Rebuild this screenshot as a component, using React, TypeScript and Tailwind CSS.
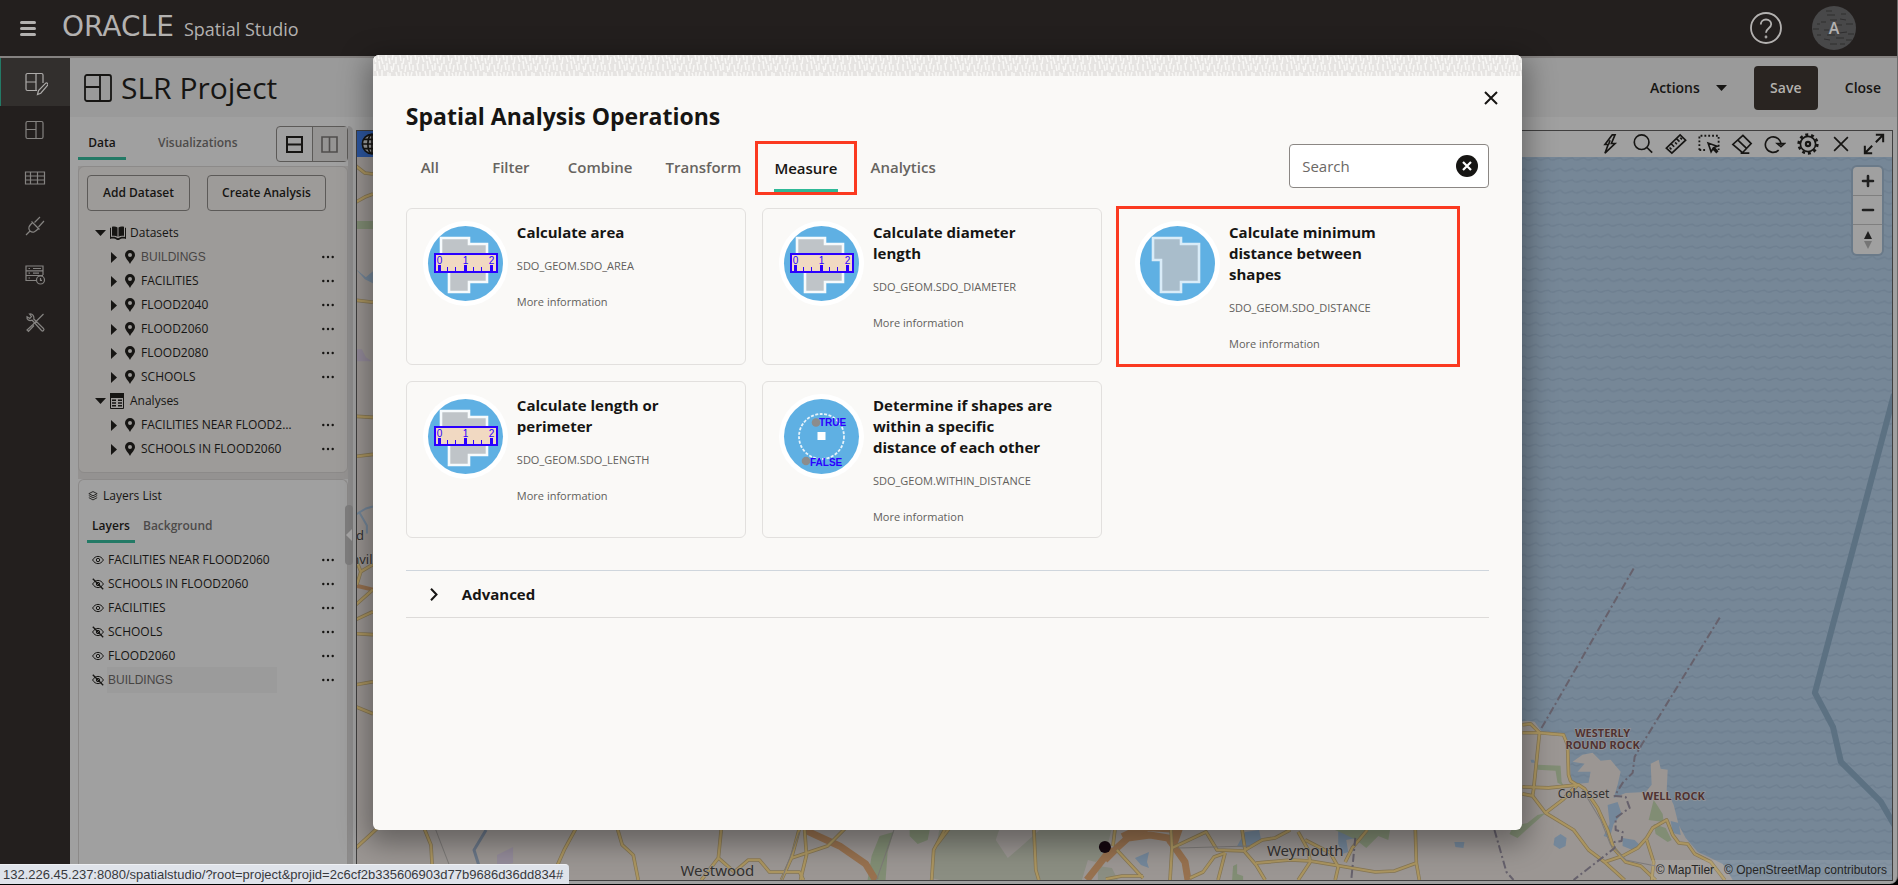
import type { ReactNode } from "react";

const SANS = "font-['Open_Sans','Noto_Sans',sans-serif]";

/* ---------- icons ---------- */

type IconProps = { className?: string; children: ReactNode; box?: string };

function Icon({ className = "size-6", children, box = "0 0 24 24" }: IconProps) {
  return (
    <svg
      viewBox={box}
      className={className}
      fill="none"
      stroke="currentColor"
      strokeWidth="1.8"
      aria-hidden="true"
    >
      {children}
    </svg>
  );
}

const LayoutIcon = ({ className }: { className?: string }) => (
  <Icon className={className} box="0 0 28 28">
    <rect x="1" y="1" width="26" height="26" rx="2" />
    <path d="M16 1v26M1 13h15" />
  </Icon>
);

const PinIcon = () => (
  <svg viewBox="0 0 10 14" className="h-[14px] w-[10px]" fill="currentColor" aria-hidden="true">
    <path fillRule="evenodd" d="M5 0a5 5 0 0 1 5 5c0 3-3 5-5 9C3 10 0 8 0 5a5 5 0 0 1 5-5Zm0 3a2 2 0 1 0 0 4 2 2 0 0 0 0-4Z" />
  </svg>
);

const CaretRight = () => (
  <svg viewBox="0 0 6 11" className="h-[11px] w-[6px]" fill="currentColor" aria-hidden="true">
    <path d="M0 0l6 5.500L0 11Z" />
  </svg>
);

const CaretDown = ({ className = "h-[6px] w-[11px]" }: { className?: string }) => (
  <svg viewBox="0 0 11 6" className={className} fill="currentColor" aria-hidden="true">
    <path d="M0 0h11L5.500 6Z" />
  </svg>
);

const DotsIcon = () => (
  <svg viewBox="0 0 12 4" className="h-1 w-3" fill="currentColor" aria-hidden="true">
    <circle cx="1.300" cy="2" r="1.200" />
    <circle cx="6" cy="2" r="1.200" />
    <circle cx="10.700" cy="2" r="1.200" />
  </svg>
);

const EyeIcon = ({ off }: { off?: boolean }) => (
  <svg viewBox="0 0 12 12" className="size-3" fill="none" stroke="currentColor" aria-hidden="true">
    <path d="M.6 6C2 3.600 3.900 2.400 6 2.400S10 3.600 11.400 6C10 8.400 8.100 9.600 6 9.600S2 8.400.6 6Z" />
    <circle cx="6" cy="6" r="1.700" />
    {off && <path d="M.8.8l10.400 10.400" strokeWidth="1.300" />}
  </svg>
);

/* ---------- top bar ---------- */

function TopBar() {
  return (
    <header className="flex h-[58px] shrink-0 items-center border-b-2 border-[#858281] bg-[#231f1e] pr-[41px] pl-5 text-[#b3b1b0]">
      <button aria-label="Menu" className="flex w-4 flex-col gap-[3px]">
        <span className="h-[3px] rounded-sm bg-current" />
        <span className="h-[3px] rounded-sm bg-current" />
        <span className="h-[3px] rounded-sm bg-current" />
      </button>
      <a href="#home" className="ml-[26px] flex items-baseline gap-[10px]">
        <span className="font-['DejaVu_Sans',sans-serif] text-[28px] leading-[30px]">ORACLE</span>
        <span className="text-[18px] leading-[30px]">Spatial Studio</span>
      </a>
      <button aria-label="Help" className="ml-auto">
        <svg viewBox="0 0 32 32" className="size-8" fill="none" stroke="currentColor" strokeWidth="1.800" aria-hidden="true">
          <circle cx="16" cy="16" r="15" />
          <path d="M10.800 12.500c0-3 2.200-5 5.200-5s5.200 2 5.200 4.800c0 4-5.200 4-5.200 8.500" />
          <circle cx="16" cy="25" r=".5" />
        </svg>
      </button>
      <button className="relative ml-[30px] flex size-11 items-center justify-center overflow-hidden rounded-full bg-[#484849] text-[16px] font-semibold">
        <svg viewBox="0 0 44 44" className="absolute inset-0 size-full" stroke="#2f2e2f" strokeWidth="1" aria-hidden="true">
          <path d="M15 9h8M18 14h7M28 13l6 1M5 18h3M34 18h7M1 23h6M12 24h5M27 27l8-1M5 29h4M15 29h8M12 33l6 1M24 32h8M34 34h6M18 38h7M9 16h5M29 8h5M24 19h6M36 28h6M14 5h6M28 38h5" />
        </svg>
        <span className="relative">A</span>
      </button>
    </header>
  );
}

/* ---------- side navigation ---------- */

const navItems: { label: string; icon: ReactNode }[] = [
  {
    label: "Active project",
    icon: (
      <>
        <path d="M19 11V3a1.500 1.500 0 0 0-1.500-1.500h-14A1.500 1.500 0 0 0 2 3v14a1.500 1.500 0 0 0 1.500 1.500H13M12 1.500v17M2 10h10" />
        <path d="M13.500 22.500l1-4L21.500 11.300a1.300 1.300 0 0 1 2 2L16.800 21.200Z" />
      </>
    ),
  },
  {
    label: "Projects",
    icon: (
      <>
        <rect x="3" y="3.500" width="17" height="17" rx="1.500" />
        <path d="M13 3.500v17M3 11.500h10" />
      </>
    ),
  },
  { label: "Datasets", icon: <path d="M2.500 6h19v12h-19ZM2.500 10h19M2.500 14h19M7.500 6v12M14.500 6v12" /> },
  {
    label: "Connections",
    icon: <path d="M3 21l4-4M7 17c-2.500-3-1-5 2.500-8.500l6 6C12 18 10 19.500 7 17ZM11.500 8.500L17 3M15.500 13L21 7M8.500 7.500l8 8" />,
  },
  {
    label: "Jobs",
    icon: (
      <>
        <path d="M13 18.500H3v-5h17M3 8.800h17M3 8.800V4h17v9M3 8.800v4.700M5.500 6.500H7M10 6.500h8M5.500 11.200H7M10 11.200h6M5.500 16H7" />
        <circle cx="17.500" cy="18" r="4" />
        <path d="M17.500 16v2.300H19" />
      </>
    ),
  },
  {
    label: "Tools",
    icon: (
      <path d="M20.500 4L10 14.500 4 20l1.500 1.500L11 15.500M9 10l9.500 10.500a1.300 1.300 0 0 0 2-2L10.800 9c.6-2.500-1-5.500-4.300-5l2 2.500-1.700 2L4 6.700c-.6 3 2.500 4.800 5 3.300" />
    ),
  },
];

function SideNav() {
  return (
    <nav className="flex w-[70px] shrink-0 flex-col bg-[#231f1e] text-[#858381]">
      {navItems.map((item, i) => (
        <a
          key={item.label}
          href={"#" + item.label.toLowerCase().replace(" ", "-")}
          aria-label={item.label}
          className={
            "flex h-12 items-center justify-center " +
            (i === 0 ? "border-l border-[#237a66] bg-[#322f2d] pt-1 text-[#aeacaa]" : "")
          }
        >
          <svg viewBox="0 0 24 24" className="size-6" fill="none" stroke="currentColor" strokeWidth="1.200" aria-hidden="true">
            {item.icon}
          </svg>
        </a>
      ))}
    </nav>
  );
}

/* ---------- project bar ---------- */

function ProjectBar() {
  return (
    <div className="flex h-[59px] items-center bg-[#9a9a9a] pr-4 pl-[14px]">
      <LayoutIcon className="size-7" />
      <h1 className="ml-[9px] text-[30px] leading-9">SLR Project</h1>
      <button className="ml-auto flex items-center gap-4 text-[14px] font-semibold">
        Actions
        <CaretDown />
      </button>
      <button className="ml-[27px] h-11 w-16 rounded bg-[#292421] text-[14px] font-semibold text-[#b3b1ae]">Save</button>
      <button className="ml-[27px] text-[14px] font-semibold">Close</button>
    </div>
  );
}

/* ---------- left panel ---------- */

const datasets = ["BUILDINGS", "FACILITIES", "FLOOD2040", "FLOOD2060", "FLOOD2080", "SCHOOLS"];
const analyses = ["FACILITIES NEAR FLOOD2060", "SCHOOLS IN FLOOD2060"];
const layers = [
  { name: "FACILITIES NEAR FLOOD2060", visible: true },
  { name: "SCHOOLS IN FLOOD2060", visible: false },
  { name: "FACILITIES", visible: true },
  { name: "SCHOOLS", visible: false },
  { name: "FLOOD2060", visible: true },
  { name: "BUILDINGS", visible: false },
];

const ARIAL = "font-['Liberation_Sans',Arial,sans-serif] text-[#474544]";

function TreeRow({ name }: { name: string }) {
  return (
    <li className="flex h-6 items-center pl-8">
      <button aria-label={"Expand " + name} className="w-[14px]">
        <CaretRight />
      </button>
      <PinIcon />
      <span className={"ml-[6px] w-[156px] truncate text-[12px] " + (name === "BUILDINGS" ? ARIAL : "")}>{name}</span>
      <button aria-label={"Options for " + name} className="mr-[13px] ml-auto">
        <DotsIcon />
      </button>
    </li>
  );
}

function DataPanel() {
  return (
    <section className="rounded-md border border-[#8c8a89] bg-[#9d9b99] pt-2 pb-[11px]">
      <div className="flex gap-[17px] pl-2 text-[12px] font-semibold">
        <button className="h-9 w-[103px] rounded border border-[#5c5a58]">Add Dataset</button>
        <button className="h-9 w-[119px] rounded border border-[#5c5a58]">Create Analysis</button>
      </div>
      <div className="mt-[10px] flex h-6 items-center pl-4 text-[12px]">
        <CaretDown />
        <svg viewBox="0 0 16 14" className="mx-1 h-[14px] w-4" aria-hidden="true">
          <path fill="currentColor" d="M0 2l1-.5V11c3-.6 5 0 7 1.300C10 11 12 10.400 15 11V1.500l1 .5v11c-3-.8-5-.4-7 1H7c-2-1.400-4-1.800-7-1Z" />
          <path fill="currentColor" d="M2 .7c2.500-.6 4-.2 5.500.8v9.200C6 9.700 4.500 9.400 2 9.800ZM14 .7c-2.500-.6-4-.2-5.500.8v9.200c1.500-1 3-1.300 5.500-.9Z" />
        </svg>
        Datasets
      </div>
      <ul>
        {datasets.map((name) => (
          <TreeRow key={name} name={name} />
        ))}
      </ul>
      <div className="flex h-6 items-center pl-4 text-[12px]">
        <CaretDown />
        <svg viewBox="0 0 14 16" className="mr-[6px] ml-1 h-4 w-[14px]" aria-hidden="true">
          <path fill="currentColor" d="M0 0h14v5H0Z" />
          <path fill="none" stroke="currentColor" d="M.5 5v10.500h13V5" />
          <path fill="currentColor" d="M2 6.500h4V8H2zM2 9.300h4v1.500H2zM2 12h4v1.500H2zM8 6.500h4V8H8zM8 9.300h4v1.500H8zM8 12h4v1.500H8z" />
        </svg>
        Analyses
      </div>
      <ul>
        {analyses.map((name) => (
          <TreeRow key={name} name={name} />
        ))}
      </ul>
    </section>
  );
}

function LayersPanel() {
  return (
    <section className="grow rounded-t-md border border-b-0 border-[#8c8a89] pl-2">
      <h2 className="flex h-8 items-center gap-[5px] pl-px text-[12px]">
        <svg viewBox="0 0 12 12" className="size-[10px]" fill="none" stroke="currentColor" aria-hidden="true">
          <path d="M6 .7l5 2.500-5 2.500-5-2.500ZM1 5.500L6 8l5-2.500M1 8l5 2.700L11 8" />
        </svg>
        Layers List
      </h2>
      <div className="flex gap-2 text-[12px] font-semibold" role="tablist">
        <button role="tab" aria-selected="true" className="h-[31px] w-12 border-b-[3px] border-[#237a66]">
          Layers
        </button>
        <button role="tab" aria-selected="false" className="h-7 text-[#4d4b4a]">
          Background
        </button>
      </div>
      <ul className="mt-[5px]">
        {layers.map((layer) => (
          <li key={layer.name} className="flex h-6 items-center gap-[3px] pl-[5px] text-[12px]">
            <button aria-label={(layer.visible ? "Hide " : "Show ") + layer.name}>
              <EyeIcon off={!layer.visible} />
            </button>
            <span
              className={
                layer.name === "BUILDINGS" ? "w-[170px] bg-[#9b9b9b] py-[5px] pl-px leading-4 " + ARIAL : "pl-px"
              }
            >
              {layer.name}
            </span>
            <button aria-label={"Options for " + layer.name} className="mr-[13px] ml-auto">
              <DotsIcon />
            </button>
          </li>
        ))}
      </ul>
    </section>
  );
}

function LeftPanel() {
  return (
    <aside className="flex w-[283px] shrink-0 pl-2">
      <div className="flex min-w-0 grow flex-col">
        <div className="flex h-[43px] items-end text-[12px] font-semibold">
          <div role="tablist" className="flex">
            <button role="tab" aria-selected="true" className="h-8 w-12 border-b-[3px] border-[#237a66]">
              Data
            </button>
            <button role="tab" aria-selected="false" className="h-[29px] pl-8 text-[#4d4b4a]">
              Visualizations
            </button>
          </div>
          <div className="mb-[-2px] ml-auto flex h-9 w-[72px] divide-x divide-[#5c5a58] rounded border border-[#5c5a58]">
            <button aria-label="Stacked layout" className="flex flex-1 items-center justify-center">
              <svg viewBox="0 0 17 17" className="size-[17px]" fill="none" stroke="currentColor" strokeWidth="2" aria-hidden="true">
                <path d="M1 1h15v15H1ZM1 8.500h15" />
              </svg>
            </button>
            <button
              aria-label="Side by side layout"
              className="flex flex-1 items-center justify-center bg-[#959493] text-[#504e4d]"
            >
              <svg viewBox="0 0 17 17" className="size-[17px]" fill="none" stroke="currentColor" strokeWidth="1.600" aria-hidden="true">
                <path d="M1 1h15v15H1ZM8.500 1v15" />
              </svg>
            </button>
          </div>
        </div>
        <div className="mt-[6px] flex grow flex-col gap-[6px] bg-[#949291]">
          <DataPanel />
          <div className="flex grow flex-col bg-[#a0a0a0]">
            <LayersPanel />
          </div>
        </div>
      </div>
      <div className="mt-[9px] flex w-[5px] rounded-tr-md bg-[#8d8c8c]">
        <button
          aria-label="Collapse panel"
          className="relative -left-[3px] mt-[379px] flex h-[60px] w-2 shrink-0 items-center justify-center rounded-sm bg-[#7e7d7d] text-[#a6a5a5]"
        >
          <svg viewBox="0 0 6 12" className="h-3 w-[6px]" fill="currentColor" aria-hidden="true">
            <path d="M6 0v12L0 6Z" />
          </svg>
        </button>
      </div>
    </aside>
  );
}

/* ---------- map ---------- */

const mapTools: { label: string; icon: ReactNode }[] = [
  {
    label: "Quick actions",
    icon: <path d="M14.500 2L6.500 12.500H10L6.500 22 17.500 11.500H13.500L17.500 2ZM12 8l-1.500 4.500" strokeWidth="1.800" />,
  },
  {
    label: "Find",
    icon: (
      <>
        <circle cx="10.500" cy="10" r="8" />
        <path d="M16.300 15.800L22 21.500" />
      </>
    ),
  },
  {
    label: "Measure distance",
    icon: <path d="M1.500 16.500L16.500 2l6 5.800L7.500 22ZM7 17.800l-2-2M10 15l-3-3M13 12.300l-2-2M15.800 9.500l-3-3M18.500 7l-1.800-1.800" />,
  },
  {
    label: "Select by rectangle",
    icon: (
      <>
        <path d="M1.500 18.500V3h21v15.500M1.500 18.500h8" strokeDasharray="2 2.200" strokeWidth="2" />
        <path d="M11 11l3.300 9.500 2-3.500 3.700 4 1.200-1.200-3.700-4 3.300-1.300Z" />
      </>
    ),
  },
  {
    label: "Erase",
    icon: <path d="M13 2.500l9 9L12.500 21.500 2 12.500ZM7.500 7.800l9.500 9M10.500 22H20" />,
  },
  { label: "Rotate", icon: <path d="M16 18.700A8.500 8.500 0 1 1 18.500 13M14.500 11.500l4 3.500L22.300 11.500Z" /> },
  {
    label: "Settings",
    icon: (
      <>
        <circle cx="12" cy="12" r="8.300" />
        <circle cx="12" cy="12" r="10.200" strokeWidth="2.800" strokeDasharray="3.200 3.200" />
        <circle cx="12" cy="12" r="2.300" strokeWidth="2.400" />
      </>
    ),
  },
  { label: "Clear", icon: <path d="M4.500 4.500l15 15M19.500 4.500l-15 15" /> },
  { label: "Full screen", icon: <path d="M14 2h8v8M10 22H2v-8M21.500 2.500L14 10M10 14l-7.500 7.500" strokeWidth="2.200" /> },
];

const roads = [
  "M1522 733H1539L1563 735 1567 745 1568 775 1570 781 1578 786",
  "M1522 725L1530 724 1539 733 1533 790 1532 796",
  "M1522 787L1548 788 1578 785 1584 789 1597 808 1607 830 1613 848 1625 862 1640 866 1655 880",
  "M1522 794L1532 796 1545 813 1573 830 1588 850 1604 862 1624 880",
  "M1545 813L1562 800 1576 786",
  "M1604 862L1622 856 1637 848 1646 838 1652 828 1666 820 1672 835 1678 843 1687 844 1694 854 1710 862 1724 880",
  "M1646 840L1653 862 1651 880",
  "M355 850L381 826M425 828L432 845 434 880",
  "M577 828L565 850 557 868 552 880M618 828L623 845 634 855 639 880",
  "M722 828L719 858 702 880M719 858L735 872 749 860 760 860 770 872 800 872 804 880",
  "M800 828L792 858 782 880M792 858L828 846 846 828M805 828L807 855 801 880",
  "M946 828L934 850 932 880M950 828L937 845M1034 828L1036 870 1039 880",
  "M1115 830L1113 846M1117 850L1143 878M1106 879L1122 876 1143 876",
  "M1172 848L1206 832 1217 850 1244 851 1256 865 1265 880M1171 830L1172 848 1170 880M1225 853L1218 880",
  "M1225 853L1214 857 1203 872 1190 878M1242 830L1245 850 1262 840 1275 838 1290 830",
  "M1256 863L1290 860 1310 861 1346 867 1375 872 1394 871 1416 863 1419 880M1415 830L1416 863",
  "M1298 832L1308 850 1310 862 1298 880M1305 840L1330 853 1338 867 1335 880M1345 862L1352 848 1367 830",
  "M357 167L366 174 374 175M357 203L366 198 374 195M357 301L374 303M357 417L374 418M357 457L374 455",
  "M357 560L362 572 374 565M362 572L358 585M357 605L374 590M357 620L374 612M357 634L374 635M357 685L374 682M357 707L374 714",
];

function MapCanvas() {
  return (
    <svg
      viewBox="355 158 1536 722"
      preserveAspectRatio="xMaxYMax slice"
      className="absolute inset-0 size-full"
      role="img"
      aria-label="Map of the coast around Weymouth and Cohasset"
    >
      <defs>
        <pattern id="waves" width="24" height="22" patternUnits="userSpaceOnUse">
          <rect width="24" height="22" fill="#768797" />
          <path
            d="M0 5q3 3 6 1.500t6-1.500q3 3 6 1.500t6-1.500M0 15q3 4 6 3t6-2q3 3 6 1.500t6-2.500"
            fill="none"
            stroke="#6e7f90"
            strokeWidth="1.500"
          />
        </pattern>
      </defs>
      <rect x="350" y="150" width="1550" height="735" fill="#9b9693" />
      <path
        fill="url(#waves)"
        d="M1400 150H1900V885H1735L1722 864 1708 857 1697 852 1685 838 1678 825 1673 805 1666 790 1667 770 1660 769 1658 760 1650 764 1651 785 1645 792 1625 793 1613 798 1617 785 1620 772 1610 760 1600 761 1592 753 1582 755 1572 762 1584 764 1577 772 1590 772 1588 783 1578 784 1570 781 1569 745 1564 736 1541 732 1534 722 1527 721 1500 723Z"
      />
      <g fill="#74879a">
        <path d="M1554 838l6-4 6 4-1 8-6 3-6-4ZM1670 821l8 2 2 12-8-2ZM1607 805l10-3 4 12-8 10-4 14-6-2 6-12ZM1622 838l12 2 6 6-8 4-10-4ZM1245 832l14-2 2 10-16 8-8-2ZM1338 830l14 2 4 6-10 2 2 12-6 2-4-10ZM1135 858l14-6-2 10 2 6-8-3ZM1454 842l10 0-1 6-8-1ZM357 270l10 8 7-6v12l-8-4ZM1530 760h3l2 3h-4Z" />
      </g>
      <g fill="#818d74">
        <path d="M1537 765l23 1 1 16 2 4-6-3-2-12-18-1ZM1653 800l4 6 5 8 1 8-15-2ZM1653 824l12 4 6 12-4 2-12-8ZM1545 813l-28 25-8-4 4-8 14-3 10-8ZM1330 828h60l-2 12-10-4-12 12-10-8-12-6-14-6ZM1233 866l4-2v10l6 2v4h-11ZM910 830h20l-2 10-10 4-8-8ZM880 836l14-4-6 20-2 28h-18l4-24ZM357 222h17v8h-17Z" />
      </g>
      <path fill="#8b8e82" d="M940 828h60l-4 12 12 18 14-12 20-18h70l-6 24-10 10-8-2-6 20H940l-8-2 2-20ZM1098 866l14 2 6 12h-20Z" />
      <path fill="#948b9a" d="M498 855l16-8v16l-16 4ZM357 350h6l4 8 6 4h-16Z" />
      <g fill="none" strokeLinejoin="round">
        <path d="M805 830L840 846 866 864 876 880M1105 860L1117 848 1128 838 1150 835 1168 838 1178 852 1185 862 1188 880M1112 848L1087 880" stroke="#97714f" strokeWidth="7" />
        <path d="M1123 838L1148 826 1178 828 1172 845" stroke="#97714f" strokeWidth="10" />
        <path d="M357 586L374 590" stroke="#97714f" strokeWidth="4" />
        {roads.map((d) => (
          <path key={d} d={d} stroke="#857654" strokeWidth="3.600" />
        ))}
        {roads.map((d) => (
          <path key={d} d={d} stroke="#ab9560" strokeWidth="2.200" />
        ))}
        <path d="M895 828L877 880M800 832L782 880M436 828L456 880M1178 848L1250 846M1582 790L1600 820 1610 845 1625 860 1655 866" stroke="#7d7a78" strokeWidth="1" />
        <path
          d="M1633 569L1540 730M1719 618L1641 745 1634 757 1632 773 1622 783 1614 796 1625 797 1629 808 1615 818 1615 830 1622 832 1621 841 1614 842 1614 848 1573 880M1355 838L1351 880M1494 830L1506 872 1513 880"
          stroke="#66616c"
          strokeWidth="2"
          strokeDasharray="8 3 2 3"
        />
        <path d="M487 830L475 850 480 866" stroke="#6a7788" strokeWidth="3" />
        <path d="M357 515l10-6 7-2M360 512l8 14v8" stroke="#74879a" strokeWidth="2" />
        <path d="M1893 395L1814 693 1832 727 1840 762 1880 802 1895 828" stroke="#5c7182" strokeWidth="6" />
      </g>
      <circle cx="1105" cy="847" r="6" fill="#150810" />
      <g
        className="font-['Noto_Sans','Open_Sans',sans-serif]"
        fill="#333130"
        stroke="#a09c99"
        strokeWidth="1"
        paintOrder="stroke"
        textAnchor="middle"
      >
        <g fontSize="15">
          <text x="718" y="876">Westwood</text>
          <text x="1305" y="856">Weymouth</text>
        </g>
        <text x="1583" y="798" fontSize="12">Cohasset</text>
        <text x="361" y="540" fontSize="13">d</text>
        <text x="363" y="564" fontSize="13">nvil</text>
        <g fontSize="11" fontWeight="700" fill="#4f3232">
          <text x="1602" y="737">WESTERLY</text>
          <text x="1602" y="749">ROUND ROCK</text>
          <text x="1673" y="800">WELL ROCK</text>
        </g>
      </g>
    </svg>
  );
}

function MapPane() {
  return (
    <main className="mt-[13px] mr-1 mb-[3px] ml-[3px] flex min-w-0 grow flex-col border border-[#403f3f]">
      <div className="flex h-[26px] shrink-0 items-center justify-end gap-[11px] pr-[7px]">
        <button aria-label="Basemap" className="mr-auto flex h-[26px] w-8 items-center bg-[#2c569f] pl-1">
          <Icon className="size-[22px]">
            <circle cx="12" cy="12" r="10.500" fill="#a0a0a0" />
            <ellipse cx="12" cy="12" rx="4.500" ry="10.500" />
            <path d="M1.500 12h21M3 7h18M3 17h18M12 1.500v21" />
          </Icon>
        </button>
        {mapTools.map((tool) => (
          <button key={tool.label} aria-label={tool.label}>
            <Icon className="size-[22px]">{tool.icon}</Icon>
          </button>
        ))}
      </div>
      <div className="relative grow overflow-hidden">
        <MapCanvas />
        <div className="absolute top-[10px] right-[10px] flex flex-col divide-y divide-[#7f7f7f] overflow-hidden rounded bg-[#a0a0a0] text-[#202020] shadow-[0_0_0_2px_#6a7a89]">
          <button aria-label="Zoom in" className="flex size-[29px] items-center justify-center">
            <Icon className="size-[14px]" box="0 0 14 14">
              <path d="M7 2v10M2 7h10" strokeWidth="2.600" strokeLinecap="round" />
            </Icon>
          </button>
          <button aria-label="Zoom out" className="flex size-[29px] items-center justify-center">
            <Icon className="size-[14px]" box="0 0 14 14">
              <path d="M2 7h10" strokeWidth="2.600" strokeLinecap="round" />
            </Icon>
          </button>
          <button aria-label="Reset north" className="flex size-[29px] items-center justify-center">
            <svg viewBox="0 0 10 18" className="h-[18px] w-[10px]" aria-hidden="true">
              <path d="M5 0l4 8H1Z" fill="#202020" />
              <path d="M5 18l4-8H1Z" fill="#757575" />
            </svg>
          </button>
        </div>
        <p className="absolute right-0 bottom-0 flex h-5 items-center gap-[10px] bg-white/10 px-[5px] font-['Liberation_Sans',Arial,sans-serif] text-[12px] text-[#262626]">
          <a href="#maptiler">© MapTiler</a>
          <a href="#osm">© OpenStreetMap contributors</a>
        </p>
      </div>
    </main>
  );
}

/* ---------- dialog ---------- */

const tabs = ["All", "Filter", "Combine", "Transform", "Measure", "Analytics"];

type Art = "ruler" | "shape" | "within";

const operations: { title: string; code: string; art: Art; marked?: boolean }[] = [
  { title: "Calculate area", code: "SDO_GEOM.SDO_AREA", art: "ruler" },
  { title: "Calculate diameter length", code: "SDO_GEOM.SDO_DIAMETER", art: "ruler" },
  { title: "Calculate minimum distance between shapes", code: "SDO_GEOM.SDO_DISTANCE", art: "shape", marked: true },
  { title: "Calculate length or perimeter", code: "SDO_GEOM.SDO_LENGTH", art: "ruler" },
  { title: "Determine if shapes are within a specific distance of each other", code: "SDO_GEOM.WITHIN_DISTANCE", art: "within" },
];

function OperationArt({ art }: { art: Art }) {
  return (
    <svg
      viewBox="0 0 85 85"
      className="size-[85px] shrink-0 font-['Liberation_Sans',Arial,sans-serif]"
      aria-hidden="true"
    >
      <circle cx="42.500" cy="42.500" r="42.500" fill="#fff" />
      <circle cx="42.500" cy="42.500" r="37.500" fill="#5fb0e3" />
      {art !== "within" && (
        <path
          d="M18 17H46V23H64V61H46V71H26V39H18Z"
          fill={art === "shape" ? "#a9bdcb" : "#bfc4c8"}
          stroke={art === "shape" ? "#d9ecf8" : "#f6fafc"}
          strokeWidth="2.600"
        />
      )}
      {art === "ruler" && (
        <g fill="#2a00ff">
          <rect x="12" y="33" width="62" height="18" fill="#f1d9c2" stroke="#2a00ff" strokeWidth="2" />
          <path d="M15 44h3v7h-3ZM41 44h3v7h-3ZM67 44h3v7h-3ZM24 46h1v5h-1ZM32 46h1v5h-1ZM50 46h1v5h-1ZM58 46h1v5h-1Z" />
          <g fontSize="10" textAnchor="middle">
            <text x="16.500" y="43">0</text>
            <text x="42.500" y="43">1</text>
            <text x="68.500" y="43">2</text>
          </g>
        </g>
      )}
      {art === "within" && (
        <g fontSize="10" fontWeight="700" fill="#2a00ff">
          <circle cx="42.500" cy="42.500" r="22.500" fill="none" stroke="#e6f3fb" strokeWidth="1.800" strokeDasharray="3 1.500" />
          <rect x="38.500" y="38" width="8" height="8" fill="#fff" />
          <circle cx="37" cy="28.500" r="4.300" fill="#8c8c8c" />
          <circle cx="27" cy="67" r="4.300" fill="#8c8c8c" />
          <text x="40" y="31.500">TRUE</text>
          <text x="31" y="72">FALSE</text>
        </g>
      )}
    </svg>
  );
}

function OperationCard({ title, code, art, marked }: (typeof operations)[number]) {
  return (
    <li
      className={
        "flex min-h-[157px] gap-[9px] border border-[#e2e0de] px-4 pt-3 pb-2 " +
        (marked ? "outline-[3px] -outline-offset-1 outline-[#fb3a20]" : "rounded-md")
      }
    >
      <OperationArt art={art} />
      <div className="max-w-[188px] pt-px">
        <h3 className="text-[15px] leading-[21px] font-bold">{title}</h3>
        <p className="mt-[15px] text-[11px] leading-4 text-[#625f5c]">{code}</p>
        <a href="#more" className="mt-5 block text-[11px] leading-4 text-[#625f5c]">
          More information
        </a>
      </div>
    </li>
  );
}

function AnalysisDialog() {
  return (
    <div className="absolute inset-0 flex items-start justify-center pt-[55px] pr-[3px]">
      <section
        role="dialog"
        aria-labelledby="dialog-title"
        className="relative flex min-h-[775px] w-[60.65%] flex-col overflow-hidden rounded-md bg-[#faf9f7] text-[#161513] shadow-[0_8px_28px_6px_rgba(0,0,0,0.35)]"
      >
        <svg className="h-[21px] w-full shrink-0" aria-hidden="true">
          <defs>
            <pattern id="weave" width="48" height="21" patternUnits="userSpaceOnUse">
              <rect width="48" height="21" fill="#e6e4e2" />
              <path
                d="M1 1l2 6M5 0l1 4M8 2l2 7M13 0v6M16 3l1 6M20 0l-1 5M23 2v7M27 0l1 6M31 3l-1 6M34 0l1 5M38 1v8M42 0l1 5M46 2l-1 7M2 9v7M6 6l1 8M11 10l1 6M14 8v7M18 11l1 6M21 8l-1 7M25 10l1 7M29 8v6M33 10l-1 7M36 7l1 8M40 10v6M44 8l1 7M4 16l1 5M9 15v6M15 17v4M17 18v3M23 17l1 4M28 16v5M31 18l1 3M35 17v4M39 17l-1 4M43 16l1 5M47 17v4"
                stroke="#f9f8f6"
                strokeWidth="1.500"
              />
            </pattern>
          </defs>
          <rect width="100%" height="21" fill="url(#weave)" />
        </svg>
        <button aria-label="Close dialog" className="absolute top-9 right-6">
          <svg viewBox="0 0 14 14" className="size-[14px]" fill="none" stroke="currentColor" strokeWidth="2" aria-hidden="true">
            <path d="M1 1l12 12M13 1L1 13" />
          </svg>
        </button>

        <div className="px-[33px] pt-[23px]">
          <h2 id="dialog-title" className="text-[23px] leading-[34px] font-bold">
            Spatial Analysis Operations
          </h2>

          <div className="mt-2 flex h-[54px] items-start justify-between">
            <div role="tablist" className="flex items-start gap-[33px] text-[15px] font-semibold text-[#676460]">
              {tabs.map((tab) =>
                tab === "Measure" ? (
                  <button
                    key={tab}
                    role="tab"
                    aria-selected="true"
                    className="-mx-[19px] h-[54px] border-[3px] border-[#fb3a20] px-4 text-[#161513]"
                  >
                    <span className="flex h-12 items-center border-b-[3px] border-[#2fb997] pt-[3px]">Measure</span>
                  </button>
                ) : (
                  <button key={tab} role="tab" aria-selected="false" className="h-[52px] min-w-12">
                    {tab}
                  </button>
                ),
              )}
            </div>
            <label className="mt-[3px] flex h-11 w-[200px] items-center rounded border border-[#8b8784] bg-white px-3">
              <input
                type="text"
                aria-label="Search operations"
                placeholder="Search"
                className="min-w-0 grow text-[15px] outline-none placeholder:text-[#6b6865] placeholder:opacity-100"
              />
              <button aria-label="Clear search" className="-mr-[2px]">
                <svg viewBox="0 0 22 22" className="size-[22px]" aria-hidden="true">
                  <circle cx="11" cy="11" r="11" fill="#161513" />
                  <path d="M7 7l8 8M15 7l-8 8" stroke="#fff" strokeWidth="2.200" />
                </svg>
              </button>
            </label>
          </div>

          <ul className="mt-[13px] grid grid-cols-3 gap-4 pr-[31px]">
            {operations.map((operation) => (
              <OperationCard key={operation.title} {...operation} />
            ))}
          </ul>

          <button className="mt-8 flex h-12 w-full items-center gap-6 border-t border-b border-t-[#cfd6dd] border-b-[#dddbd9] pl-6 text-[15px] font-bold">
            <svg viewBox="0 0 8 13" className="h-[13px] w-2" fill="none" stroke="currentColor" strokeWidth="2" aria-hidden="true">
              <path d="M1 .8l5.500 5.700L1 12.200" />
            </svg>
            Advanced
          </button>
        </div>
      </section>
    </div>
  );
}

/* ---------- page ---------- */

export default function App() {
  return (
    <div className={"relative flex min-h-screen flex-col bg-black pb-px text-[#161513] " + SANS}>
      <div className="flex grow flex-col overflow-hidden rounded-b-lg border-r border-[#6b6b6b] bg-[#a0a0a0]">
        <TopBar />
        <div className="flex grow">
          <SideNav />
          <div className="flex min-w-0 grow flex-col">
            <ProjectBar />
            <div className="flex grow">
              <LeftPanel />
              <MapPane />
            </div>
          </div>
        </div>
      </div>
      <AnalysisDialog />
      <p className="absolute bottom-px left-0 h-5 rounded-tr border-t border-[#eef0f4] bg-[#dfe3ea] pr-[6px] pl-[3px] font-['Liberation_Sans',Arial,sans-serif] text-[13px] leading-[19px] text-[#37393d]">
        132.226.45.237:8080/spatialstudio/?root=project&amp;projid=2c6cf2b335606903d77b9686d36dd834#
      </p>
    </div>
  );
}
